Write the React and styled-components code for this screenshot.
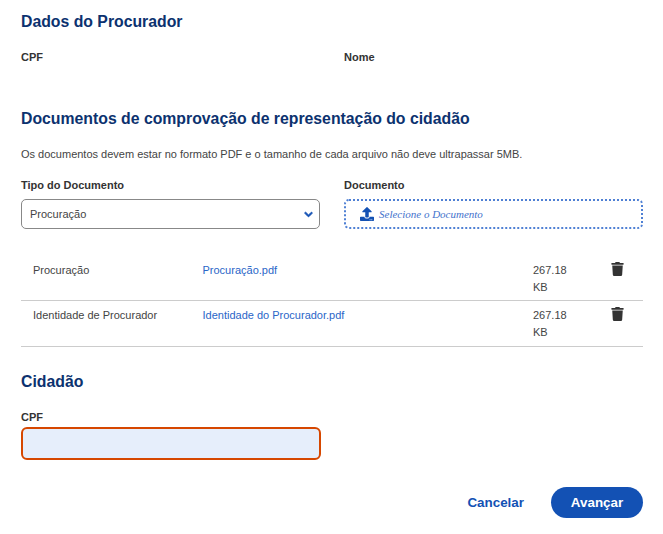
import React from "react";
import styled, { createGlobalStyle } from "styled-components";
import { FaTrash, FaChevronDown, FaUpload } from "react-icons/fa";

const Global = createGlobalStyle`
  html, body { margin: 0; padding: 0; background: #fff; }
  body { font-family: "Liberation Sans", Arial, sans-serif; color: #333; }
  * { box-sizing: border-box; }
`;

const Page = styled.div`
  width: 663px;
  height: 534px;
  padding: 13px 20px 0 21px;
  overflow: hidden;
`;
const Title = styled.h2`
  margin: 0;
  font-size: 15.8px;
  line-height: 18px;
  font-weight: 700;
  color: #0c326f;
`;
const SectionTitle = styled(Title)`
  margin-top: 46px;
`;
const CitizenTitle = styled(Title)`
  margin-top: 26px;
`;
const Grid = styled.div`
  display: grid;
  grid-template-columns: 299px 299px;
  column-gap: 24px;
  margin-top: ${(p) => p.$mt}px;
`;
const Label = styled.div`
  font-size: 11px;
  line-height: 14px;
  font-weight: 700;
  color: #333;
`;
const Note = styled.p`
  margin: 19px 0 0;
  font-size: 11px;
  line-height: 14px;
  color: #444;
`;
const Select = styled.div`
  margin-top: 7px;
  height: 30px;
  border: 1px solid #888;
  border-radius: 5px;
  display: flex;
  align-items: center;
  justify-content: space-between;
  padding: 0 6px 0 8px;
  font-size: 11px;
  color: #444;
  svg { color: #1351b4; width: 9px; height: 9px; stroke: currentColor; stroke-width: 50; }
`;
const Upload = styled.div`
  margin-top: 7px;
  height: 30px;
  border: 2px dotted #4f80d4;
  border-radius: 5px;
  display: flex;
  align-items: center;
  gap: 5px;
  padding-left: 14px;
  font-family: "Liberation Serif", serif;
  font-style: italic;
  font-size: 11px;
  color: #3f72cc;
  svg { width: 14px; height: 14px; color: #1351b4; }
`;
const Table = styled.div`
  margin-top: 17px;
`;
const Row = styled.div`
  display: grid;
  grid-template-columns: 12px 169.5px 330.5px 78px 1fr;
  height: ${(p) => p.$h}px;
  border-bottom: 1px solid #ccc;
  padding-top: ${(p) => p.$pt}px;
  font-size: 11px;
  line-height: 17px;
  color: #444;
`;
const Spacer = styled.span``;
const FileLink = styled.span`
  color: #2a66c8;
`;
const Size = styled.span`
  width: 40px;
`;
const Trash = styled.span`
  color: #333;
  svg { width: 13px; height: 14px; display: block; }
`;
const Field = styled.div`
  width: 300px;
  margin-top: 19px;
`;
const Input = styled.div`
  margin-top: 3px;
  height: 33px;
  background: #e6eefb;
  border: 2px solid #d64700;
  border-radius: 6px;
`;
const Actions = styled.div`
  margin-top: 27px;
  display: flex;
  justify-content: flex-end;
  align-items: center;
`;
const Cancel = styled.span`
  font-size: 13.4px;
  font-weight: 700;
  color: #1351b4;
  margin-right: 27px;
`;
const Primary = styled.span`
  width: 92px;
  height: 31px;
  border-radius: 16px;
  background: #1351b4;
  color: #fff;
  font-size: 13.4px;
  font-weight: 700;
  display: flex;
  align-items: center;
  justify-content: center;
`;

export default function App() {
  return (
    <Page>
      <Global />
      <Title>Dados do Procurador</Title>
      <Grid $mt={19}>
        <Label>CPF</Label>
        <Label>Nome</Label>
      </Grid>
      <SectionTitle>Documentos de comprovação de representação do cidadão</SectionTitle>
      <Note>Os documentos devem estar no formato PDF e o tamanho de cada arquivo não deve ultrapassar 5MB.</Note>
      <Grid $mt={17}>
        <div>
          <Label>Tipo do Documento</Label>
          <Select>Procuração<FaChevronDown /></Select>
        </div>
        <div>
          <Label>Documento</Label>
          <Upload><FaUpload />Selecione o Documento</Upload>
        </div>
      </Grid>
      <Table>
        <Row $h={55} $pt={16}>
          <Spacer /><span>Procuração</span><FileLink>Procuração.pdf</FileLink>
          <Size>267.18 KB</Size><Trash><FaTrash /></Trash>
        </Row>
        <Row $h={46} $pt={6}>
          <Spacer /><span>Identidade de Procurador</span><FileLink>Identidade do Procurador.pdf</FileLink>
          <Size>267.18 KB</Size><Trash><FaTrash /></Trash>
        </Row>
      </Table>
      <CitizenTitle>Cidadão</CitizenTitle>
      <Field>
        <Label>CPF</Label>
        <Input />
      </Field>
      <Actions>
        <Cancel>Cancelar</Cancel>
        <Primary>Avançar</Primary>
      </Actions>
    </Page>
  );
}
